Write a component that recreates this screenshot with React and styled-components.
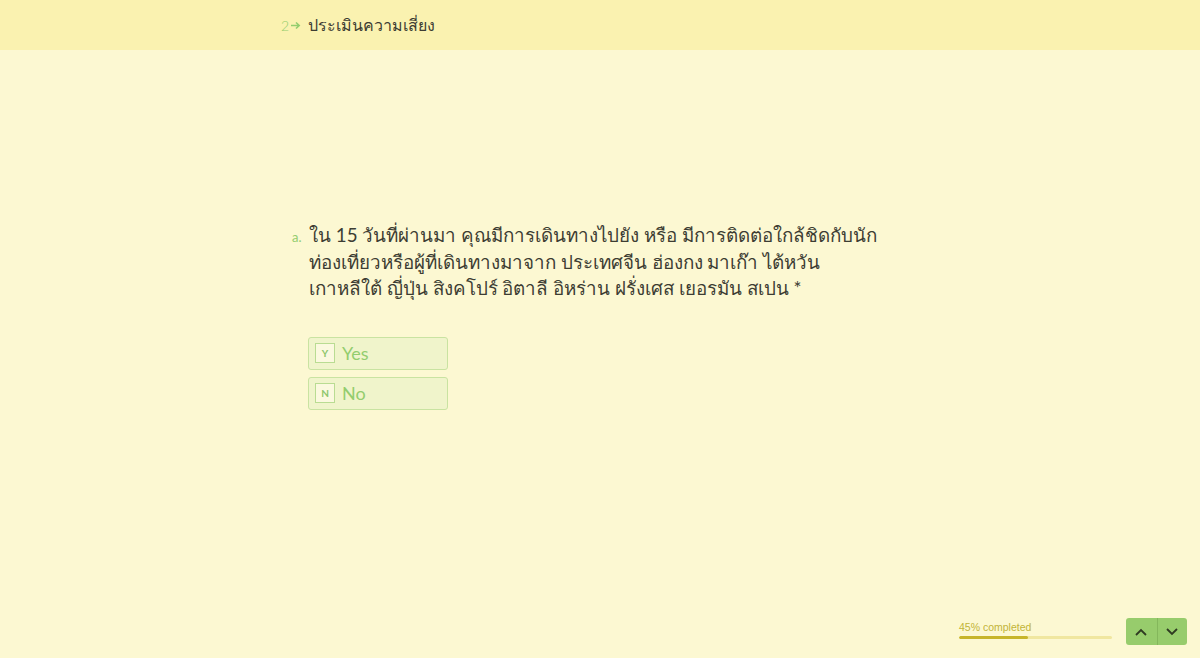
import React from 'react';
import styled, { createGlobalStyle } from 'styled-components';

const Global = createGlobalStyle`
  html, body { margin: 0; padding: 0; }
  body {
    background: #fcf8d2;
    font-family: Lato, "Noto Sans", "Liberation Sans", sans-serif;
  }
`;

const Page = styled.div`
  width: 1200px;
  height: 658px;
  display: flex;
  flex-direction: column;
  background: #fcf8d2;
  position: relative;
  overflow: hidden;
`;

const Header = styled.header`
  height: 50px;
  background: #faf2b0;
  display: flex;
  align-items: center;
  padding-left: 281px;
  box-sizing: border-box;
`;

const StepNum = styled.span`
  color: #93cd6e;
  font-size: 14px;
  font-weight: 300;
  display: flex;
  align-items: center;
  gap: 2px;
  margin-right: 7px;
`;

const HeaderTitle = styled.h1`
  margin: 0;
  font-size: 16px;
  font-weight: 400;
  color: #3d3d33;
`;

const Main = styled.main`
  flex: 1;
  padding: 172px 0 0 292px;
  box-sizing: border-box;
`;

const Question = styled.div`
  display: flex;
  align-items: flex-start;
`;

const QLabel = styled.span`
  color: #93cd6e;
  font-size: 13px;
  width: 17px;
  padding-top: 7px;
`;

const QText = styled.div`
  font-size: 18.8px;
  line-height: 26.5px;
  color: #3d3d33;
`;

const Line = styled.div`
  white-space: nowrap;
`;

const Options = styled.div`
  margin: 35px 0 0 16px;
  display: flex;
  flex-direction: column;
  gap: 7px;
`;

const Option = styled.div`
  width: 140px;
  height: 33px;
  box-sizing: border-box;
  border: 1px solid #c9e3a1;
  border-radius: 3px;
  background: #f0f4cb;
  display: flex;
  align-items: center;
  padding-left: 6px;
  gap: 7px;
`;

const Key = styled.span`
  width: 20px;
  height: 20px;
  box-sizing: border-box;
  border: 1px solid #b9dc92;
  background: #fbf9df;
  color: #8dc66a;
  font-size: 10px;
  font-weight: 700;
  display: flex;
  align-items: center;
  justify-content: center;
`;

const OptionText = styled.span`
  color: #93cd6e;
  font-size: 18px;
`;

const Footer = styled.div`
  position: absolute;
  right: 13px;
  bottom: 13px;
  display: flex;
  align-items: flex-end;
  gap: 14px;
`;

const Progress = styled.div`
  width: 153px;
  display: flex;
  flex-direction: column;
  gap: 3px;
  margin-bottom: 6px;
`;

const ProgressLabel = styled.span`
  font-family: "Liberation Sans", Arial, sans-serif;
  font-size: 10.5px;
  color: #c2b438;
`;

const Track = styled.div`
  height: 3px;
  border-radius: 2px;
  background: #f0e7a0;
  overflow: hidden;
`;

const Fill = styled.div`
  height: 100%;
  background: #c7b52a;
  border-radius: 2px;
`;

const NavGroup = styled.div`
  display: flex;
  border-radius: 3px;
  overflow: hidden;
`;

const NavButton = styled.button`
  width: 30.5px;
  height: 27px;
  border: none;
  padding: 0;
  background: #97cc6c;
  display: flex;
  align-items: center;
  justify-content: center;
  & + & { border-left: 1px solid #84b75c; }
`;

const Chevron = ({ up }) => (
  <svg width="12" height="8" viewBox="0 0 12 8">
    <path
      d={up ? 'M1 7 L6 2 L11 7' : 'M1 1 L6 6 L11 1'}
      fill="none"
      stroke="#2f3a22"
      strokeWidth="1.8"
    />
  </svg>
);

const lines = [
  'ใน 15 วันที่ผ่านมา คุณมีการเดินทางไปยัง หรือ มีการติดต่อใกล้ชิดกับนัก',
  'ท่องเที่ยวหรือผู้ที่เดินทางมาจาก ประเทศจีน ฮ่องกง มาเก๊า ไต้หวัน',
  'เกาหลีใต้ ญี่ปุ่น สิงคโปร์ อิตาลี อิหร่าน ฝรั่งเศส เยอรมัน สเปน *',
];

export default function App() {
  const progress = 45;
  return (
    <Page>
      <Global />
      <Header>
        <StepNum>
          2
          <svg width="10" height="9" viewBox="0 0 10 9">
            <path d="M0 4.5 H8 M5 1.5 L8.2 4.5 L5 7.5" fill="none" stroke="#93cd6e" strokeWidth="1.6" />
          </svg>
        </StepNum>
        <HeaderTitle>ประเมินความเสี่ยง</HeaderTitle>
      </Header>
      <Main>
        <Question>
          <QLabel>a.</QLabel>
          <QText>
            {lines.map((l) => (
              <Line key={l}>{l}</Line>
            ))}
          </QText>
        </Question>
        <Options>
          <Option>
            <Key>Y</Key>
            <OptionText>Yes</OptionText>
          </Option>
          <Option>
            <Key>N</Key>
            <OptionText>No</OptionText>
          </Option>
        </Options>
      </Main>
      <Footer>
        <Progress>
          <ProgressLabel>{progress}% completed</ProgressLabel>
          <Track>
            <Fill style={{ width: `${progress}%` }} />
          </Track>
        </Progress>
        <NavGroup>
          <NavButton><Chevron up /></NavButton>
          <NavButton><Chevron /></NavButton>
        </NavGroup>
      </Footer>
    </Page>
  );
}
